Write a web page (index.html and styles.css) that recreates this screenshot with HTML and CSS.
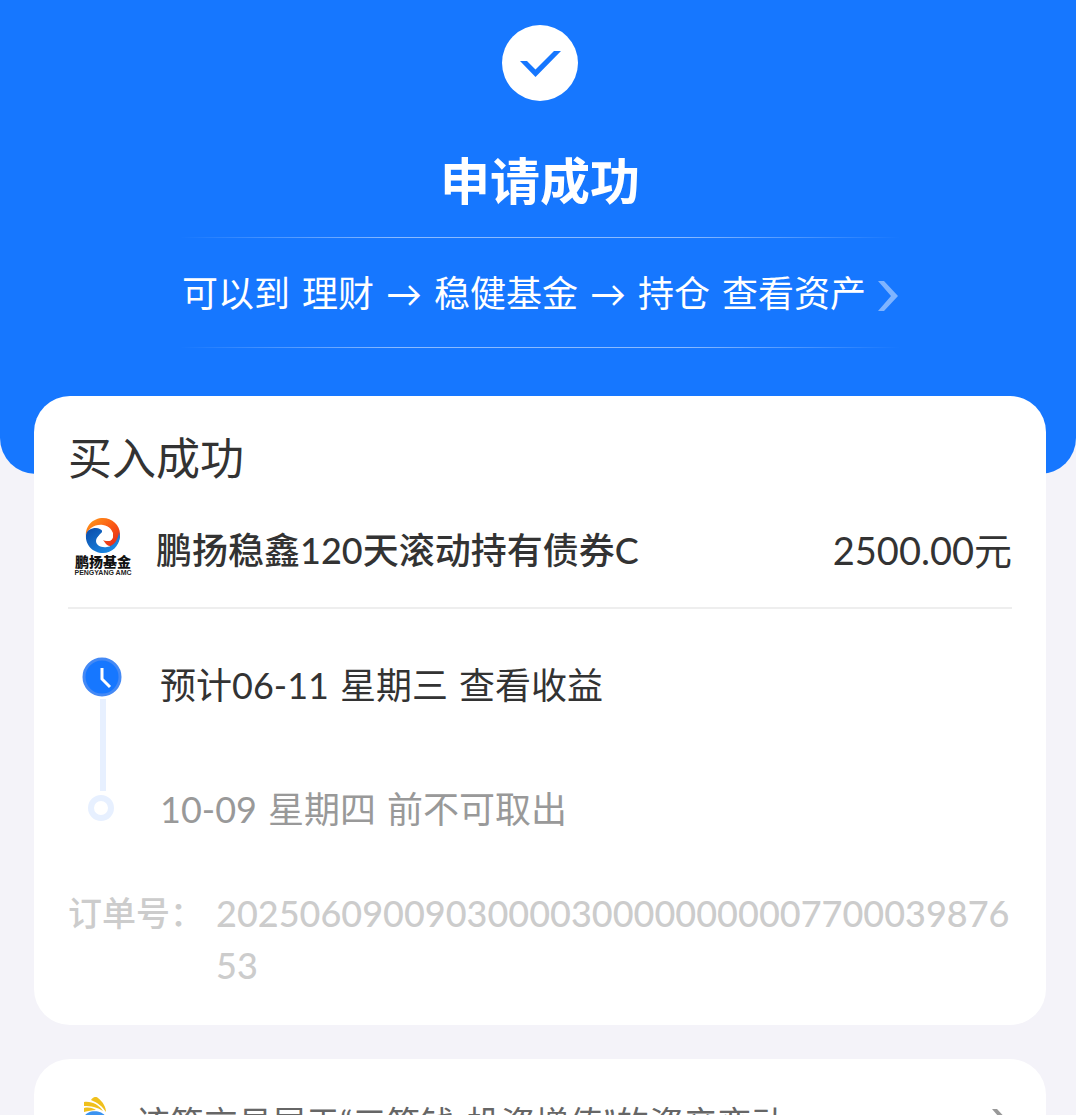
FILE: index.html
```html
<!DOCTYPE html>
<html lang="zh-CN">
<head>
  <meta charset="UTF-8">
  <meta name="viewport" content="width=device-width, initial-scale=1.0">
  <title>申请成功</title>
  <link rel="stylesheet" href="styles.css">
</head>
<body>
  <header class="hero">
    <svg class="hero-icon" viewBox="0 0 76 76" aria-hidden="true">
      <circle cx="38" cy="38" r="38" fill="#fff"/>
      <path d="M18 36h7l8.500 8.500L52 26h7L33.500 52z" fill="#1677ff"/>
    </svg>
    <h1>申请成功</h1>
    <a class="hero-link" href="#">
      <span>可以到</span>
      <span>理财</span>
      <span>→</span>
      <span>稳健基金</span>
      <span>→</span>
      <span>持仓</span>
      <span>查看资产</span>
      <svg class="hero-arrow" viewBox="0 0 20 30" aria-hidden="true">
        <path d="M0 0h6l14 15L6 30H0l13-15z" fill="#fff" fill-opacity="0.45"/>
      </svg>
    </a>
  </header>

  <main class="content">
    <section class="card order">
      <h2>买入成功</h2>
      <div class="fund">
        <svg class="fund-logo" viewBox="0 0 58 58" aria-hidden="true">
          <defs>
            <linearGradient id="warm" x1="0" y1="0" x2="1" y2="1">
              <stop offset="0" stop-color="#ffa01c"/>
              <stop offset="0.5" stop-color="#fb5a14"/>
              <stop offset="1" stop-color="#e0241c"/>
            </linearGradient>
            <linearGradient id="cool" x1="0" y1="0" x2="1" y2="1">
              <stop offset="0" stop-color="#0b4aa8"/>
              <stop offset="1" stop-color="#1e96f0"/>
            </linearGradient>
          </defs>
          <path d="M12 18C11 8 19 0 29 0c9 0 17 7 17 16 0 4-1 7-3 10-3 3-8 3-11 0l-3-4 5 1c3 0 5-2 5-6 0-5-4-9-10-10-8-1-15 3-17 11z" fill="url(#warm)"/>
          <path d="M12 17c-1 10 7 18 17 18 9 0 16-7 17-16l-1-5c-1 8-5 14-12 15-6 1-11-2-11-6 0-3 2-4 4-7l3-2c-2-3-4-4-7-4-5 0-9 2-10 7z" fill="url(#cool)"/>
          <path d="M28 12h8l3 3v4c-1 3-3 4-6 4l-5-1 3 4h-7c-2-3-1-7 2-9l2-3z" fill="#fff"/>
          <text class="logo-name" x="29" y="49" text-anchor="middle">鹏扬基金</text>
          <text class="logo-sub" x="29" y="57" text-anchor="middle">PENGYANG AMC</text>
        </svg>
        <span class="fund-name">鹏扬稳鑫120天滚动持有债券C</span>
        <span class="fund-amount">2500.00元</span>
      </div>

      <ol class="steps">
        <li class="step active">
          <svg class="step-icon" viewBox="0 0 40 40" aria-hidden="true">
            <circle cx="20" cy="20" r="18" fill="#1677ff" stroke="#4489f5" stroke-width="3"/>
            <path d="M20 11v11l8 8" fill="none" stroke="#fff" stroke-width="3"/>
          </svg>
          <span>预计06-11</span>
          <span>星期三</span>
          <span>查看收益</span>
        </li>
        <li class="step">
          <span class="step-dot"></span>
          <span>10-09</span>
          <span>星期四</span>
          <span>前不可取出</span>
        </li>
      </ol>

      <dl class="number">
        <dt>订单号：</dt>
        <dd>2025060900903000030000000000770003987653</dd>
      </dl>
    </section>

    <a class="card notice" href="#">
      <svg class="notice-icon" viewBox="0 0 30 34" aria-hidden="true">
        <path d="M9 3C11 0 14-1 16 1c5 4 8 9 8 14C20 9 16 6 9 3z" fill="#f0c01c"/>
        <path d="M2 5c8-1 15 3 19 9C15 10 9 9 2 9z" fill="#f0c01c"/>
        <path d="M2 11c5-1 9 0 12 2-4 0-8 1-12 2z" fill="#f0c01c"/>
        <path d="M2 20c3-7 17-8 22 0 2 8-4 13-11 13S1 27 2 20z" fill="#3b93f0"/>
      </svg>
      <span class="notice-text">该笔交易属于“三笔钱-投资增值”的资产变动</span>
      <svg class="notice-arrow" viewBox="0 0 20 30" aria-hidden="true">
        <path d="M0 0h5l14 15L5 30H0l13-15z" fill="#999"/>
      </svg>
    </a>
  </main>
</body>
</html>
```

FILE: styles.css
```css
* { box-sizing: border-box; }
body { margin: 0; background: #f4f3f9; color: #333; font-family: Lato, "Noto Sans CJK SC", sans-serif; font-size: 36px; line-height: 52px; }
h1, h2, ol, dl, dd { margin: 0; padding: 0; }
a { color: inherit; text-decoration: none; }

.hero { display: flex; flex-direction: column; align-items: center; height: 474px; padding: 25px 0 0 4px; background: #1677ff; color: #fff; border-radius: 0 0 36px 36px; }
.hero-icon { width: 76px; height: 76px; }
.hero h1 { margin-top: 44px; font-size: 50px; line-height: 72px; font-weight: 700; }
.hero-link { display: flex; align-items: center; justify-content: center; gap: 12px; min-width: 720px; height: 111px; margin-top: 20px; background: linear-gradient(90deg, transparent, #8bbbff 30%, #8bbbff 70%, transparent) top / 100% 1px no-repeat, linear-gradient(90deg, transparent, #8bbbff 30%, #8bbbff 70%, transparent) bottom / 100% 1px no-repeat; }
.hero-arrow { width: 20px; height: 30px; margin-top: 6px; }

.content { padding: 0 30px 34px 34px; margin-top: -78px; }
.card { background: #fff; border-radius: 36px; padding: 30px 34px 34px; }

.order h2 { font-size: 44px; line-height: 64px; font-weight: 400; }
.fund { display: flex; align-items: flex-end; margin-top: 16px; padding: 12px 0 31px 6px; border-bottom: 2px solid #eee; }
.fund-logo { width: 58px; height: 58px; margin-right: 24px; }
.logo-name { font-size: 14px; font-weight: 900; fill: #111; }
.logo-sub { font-family: "Liberation Sans", sans-serif; font-size: 7px; font-weight: 700; fill: #222; }
.fund-name { font-weight: 500; }
.fund-amount { margin-left: auto; font-size: 38px; }

.steps { list-style: none; padding-top: 50px; }
.step { position: relative; display: flex; gap: 11px; padding-left: 92px; color: #999; }
.step.active { height: 124px; color: #333; }
.step.active::before { content: ""; position: absolute; left: 32px; top: 40px; width: 6px; height: 92px; background: #e7f0ff; }
.step-icon { position: absolute; left: 14px; top: -2px; width: 40px; height: 40px; }
.step-dot { position: absolute; left: 20px; top: 12px; width: 26px; height: 26px; border: 6px solid #e7f0ff; border-radius: 50%; }

.number { display: flex; margin-top: 52px; color: #ccc; }
.number dt { flex: 0 0 148px; font-size: 34px; font-weight: 500; }
.number dd { flex: 1; min-width: 0; font-weight: 500; overflow-wrap: anywhere; }

.notice { display: flex; align-items: flex-start; margin-top: 34px; padding: 38px 34px 38px 48px; color: #666; font-size: 34px; }
.notice-icon { width: 30px; height: 34px; margin-right: 24px; }
.notice-text { flex: 1; }
.notice-arrow { width: 20px; height: 30px; margin-top: 12px; }
```
